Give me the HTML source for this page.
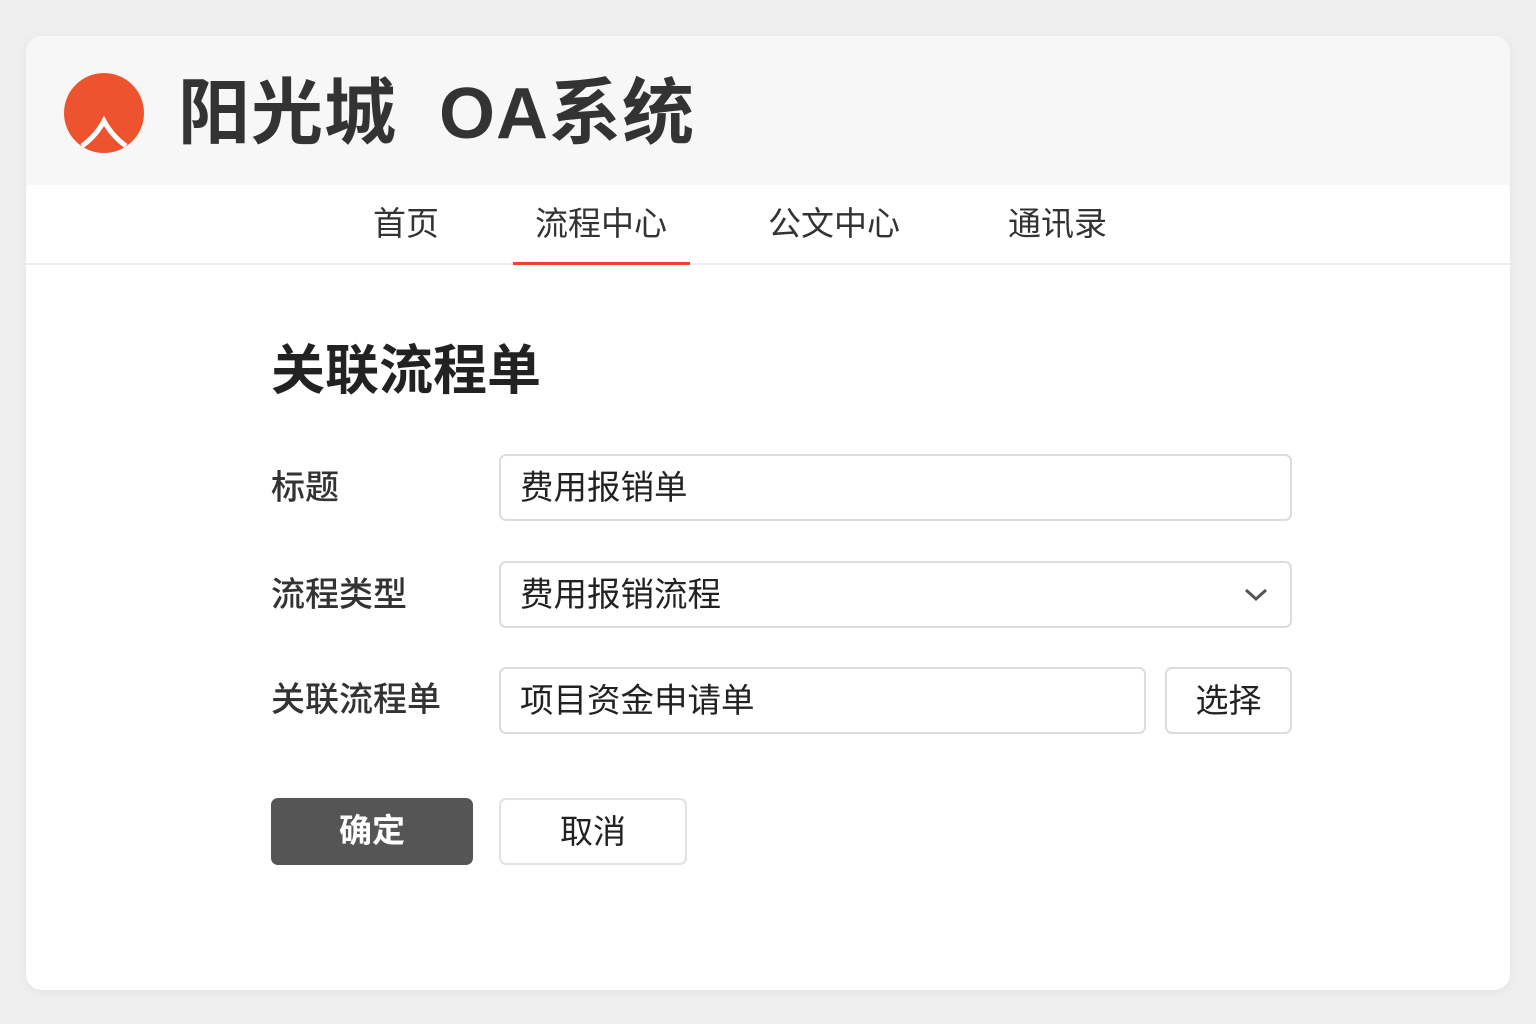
<!DOCTYPE html>
<html><head><meta charset="utf-8"><style>
*{margin:0;padding:0;box-sizing:border-box}
body{width:1536px;height:1024px;background:#efefef;font-family:"Liberation Sans","Noto Sans CJK SC",sans-serif;color:#333;position:relative;overflow:hidden}
.card{position:absolute;left:26px;top:36px;width:1484px;height:954px;background:#fff;border-radius:16px;box-shadow:0 2px 10px rgba(0,0,0,.06);overflow:hidden}
.head{position:absolute;left:0;top:0;width:100%;height:149px;background:#f7f7f7}
.logo{position:absolute;left:38px;top:37px;width:80px;height:80px}
.title{position:absolute;left:152px;top:38px;font-size:72px;font-weight:bold;color:#333;line-height:80px;letter-spacing:1px;white-space:nowrap}
.nav{position:absolute;top:149px;left:0;width:100%;height:80px;border-bottom:2px solid #eee}
.nav span{position:absolute;top:19px;font-size:33px;line-height:40px;color:#333}
.ul{position:absolute;left:487px;top:226px;width:177px;height:3px;background:#e8472a}
.abs{position:absolute;white-space:nowrap}
.h{left:245px;top:303px;font-size:54px;font-weight:bold;line-height:64px;color:#222}
.lab{font-size:34px;line-height:40px;color:#333;font-weight:500}
.box{position:absolute;border:2px solid #dcdcdc;border-radius:7px;background:#fff;font-size:33.5px;line-height:62px;padding-left:19px;padding-top:2px;color:#222}
.btn{position:absolute;border-radius:7px;font-size:33px;text-align:center;line-height:66px}
</style></head><body>
<div class="card">
 <div class="head">
  <svg class="logo" viewBox="0 0 80 80"><circle cx="40" cy="40" r="40" fill="#ee5330"/><path d="M18 73 Q32 63 40 48 Q48 63 62 73" fill="none" stroke="#fff" stroke-width="5"/></svg>
  <div class="title">阳光城&nbsp;&nbsp;OA系统</div>
 </div>
 <div class="nav">
  <span style="left:347px">首页</span>
  <span style="left:509px">流程中心</span>
  <span style="left:742px">公文中心</span>
  <span style="left:982px">通讯录</span>
 </div>
 <div class="ul"></div>
 <div class="abs h">关联流程单</div>
 <div class="abs lab" style="left:245px;top:432px">标题</div>
 <div class="box" style="left:473px;top:418px;width:793px;height:67px">费用报销单</div>
 <div class="abs lab" style="left:245px;top:539px">流程类型</div>
 <div class="box" style="left:473px;top:525px;width:793px;height:67px">费用报销流程
  <svg style="position:absolute;right:22px;top:24px" width="24" height="16" viewBox="0 0 24 16"><path d="M2 3 L12 12 L22 3" fill="none" stroke="#555" stroke-width="3"/></svg></div>
 <div class="abs lab" style="left:245px;top:644px">关联流程单</div>
 <div class="box" style="left:473px;top:631px;width:647px;height:67px">项目资金申请单</div>
 <div class="btn" style="left:1139px;top:631px;width:127px;height:67px;border:2px solid #dcdcdc;line-height:63px;color:#222">选择</div>
 <div class="btn" style="left:245px;top:762px;width:202px;height:67px;background:#555;color:#fff;font-weight:bold">确定</div>
 <div class="btn" style="left:473px;top:762px;width:188px;height:67px;border:2px solid #e2e2e2;line-height:63px;color:#222">取消</div>
</div>
</body></html>
